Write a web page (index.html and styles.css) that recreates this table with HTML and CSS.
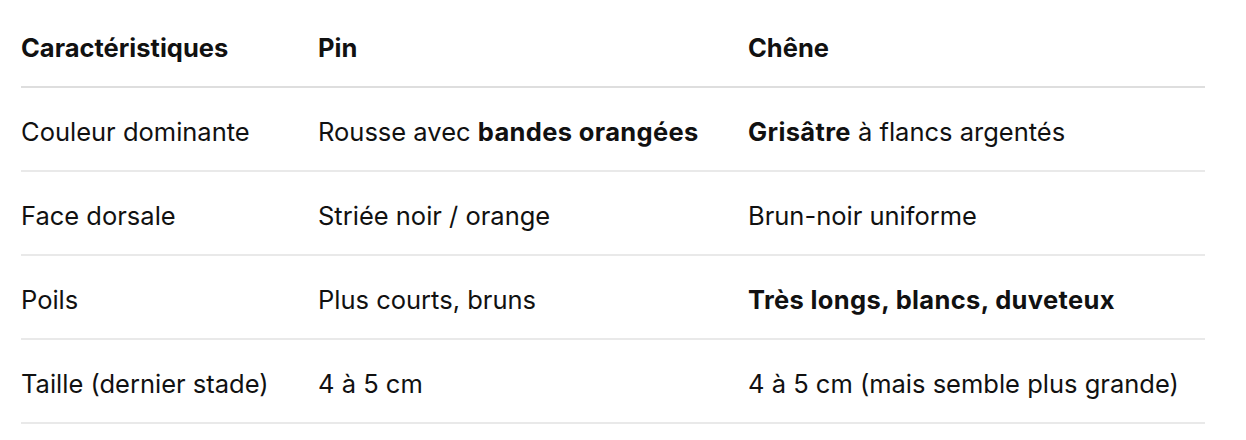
FILE: index.html
```html
<!DOCTYPE html>
<html lang="fr">
<head>
<meta charset="utf-8">
<title>Comparaison</title>
<link rel="stylesheet" href="styles.css">
</head>
<body>
<div class="table">
  <div class="row head">
    <div class="cell">Caractéristiques</div>
    <div class="cell">Pin</div>
    <div class="cell">Chêne</div>
  </div>
  <div class="row">
    <div class="cell">Couleur dominante</div>
    <div class="cell">Rousse avec <b>bandes orangées</b></div>
    <div class="cell"><b>Grisâtre</b> à flancs argentés</div>
  </div>
  <div class="row">
    <div class="cell">Face dorsale</div>
    <div class="cell">Striée noir / orange</div>
    <div class="cell">Brun-noir uniforme</div>
  </div>
  <div class="row">
    <div class="cell">Poils</div>
    <div class="cell">Plus courts, bruns</div>
    <div class="cell"><b>Très longs, blancs, duveteux</b></div>
  </div>
  <div class="row">
    <div class="cell">Taille (dernier stade)</div>
    <div class="cell">4 à 5 cm</div>
    <div class="cell">4 à 5 cm (mais semble plus grande)</div>
  </div>
</div>
</body>
</html>
```
FILE: styles.css
```css
html, body {
  margin: 0;
  padding: 0;
  background: #ffffff;
}
body {
  font-family: Inter, "Liberation Sans", sans-serif;
  color: #111111;
  font-size: 25.5px;
}
.table {
  width: 1184px;
  margin-left: 21px;
  padding-top: 4px;
}
.row {
  display: grid;
  grid-template-columns: 297px 430px 1fr;
  box-sizing: content-box;
  height: 78px;
  padding-top: 4px;
  align-items: center;
  border-bottom: 2px solid #e9e9e9;
}
.row.head {
  border-bottom-color: #dedede;
  font-weight: 700;
}
.cell {
  white-space: nowrap;
}
.cell b {
  font-weight: 700;
  letter-spacing: 0.35px;
}
```
